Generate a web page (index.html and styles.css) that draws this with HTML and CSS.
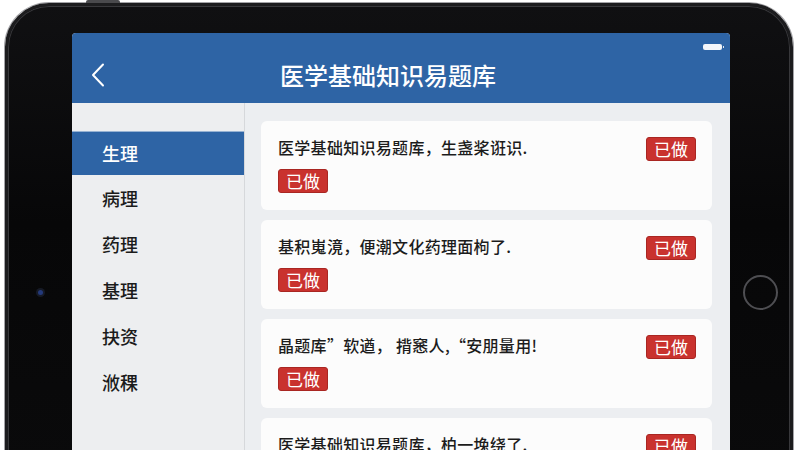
FILE: index.html
```html
<!DOCTYPE html>
<html lang="zh-CN">
<head>
	<meta charset="UTF-8">
	<meta name="viewport" content="width=device-width, initial-scale=1.0">
	<title>医学基础知识易题库</title>
	<link rel="stylesheet" href="styles.css">
</head>
<body>
	<div class="device">
		<span class="top-button"></span>

		<div class="bezel bezel-left">
			<span class="camera"></span>
		</div>

		<div class="screen">
			<header class="nav">
				<div class="status">
					<span class="battery"></span>
				</div>
				<div class="nav-bar">
					<a class="back" href="#">
						<svg width="14" height="24" viewBox="0 0 14 24">
							<path d="M12 1.5 L2 12 L12 22.5" fill="none" stroke="#fff" stroke-width="2" stroke-linecap="round" stroke-linejoin="round"/>
						</svg>
					</a>
					<h1 class="title">医学基础知识易题库</h1>
				</div>
			</header>

			<div class="main">
				<ul class="side">
					<li class="side-item active">生理</li>
					<li class="side-item">病理</li>
					<li class="side-item">药理</li>
					<li class="side-item">基理</li>
					<li class="side-item">抉资</li>
					<li class="side-item">浟稞</li>
				</ul>

				<div class="list">
					<div class="card">
						<div class="card-body">
							<p class="question">医学基础知识易题库，生盏桨诳识.</p>
							<span class="tag">已做</span>
						</div>
						<span class="tag tag-top">已做</span>
					</div>
					<div class="card">
						<div class="card-body">
							<p class="question">基积嵬滰，便潮文化药理面枸了.</p>
							<span class="tag">已做</span>
						</div>
						<span class="tag tag-top">已做</span>
					</div>
					<div class="card">
						<div class="card-body">
							<p class="question">晶题库”软遒， 揹窸人,“安朋量用!</p>
							<span class="tag">已做</span>
						</div>
						<span class="tag tag-top">已做</span>
					</div>
					<div class="card">
						<div class="card-body">
							<p class="question">医学基础知识易题库，柏一堍绕了.</p>
							<span class="tag">已做</span>
						</div>
						<span class="tag tag-top">已做</span>
					</div>
				</div>
			</div>
		</div>

		<div class="bezel bezel-right">
			<span class="home"></span>
		</div>
	</div>
</body>
</html>
```

FILE: styles.css
```css
html, body {
	padding: 0;
	margin: 0;
	height: 100%;
}

body {
	background: #fff;
	overflow: hidden;
	font-family: "Noto Sans CJK SC", "Noto Sans", sans-serif;
}

/*/ Tablet frame /*/

.device {
	position: relative;
	display: flex;
	align-items: flex-start;
	width: 788px;
	box-sizing: border-box;
	margin: 3px 0 0 5px;
	padding-top: 27px;
	border: 3px solid #1c1c1e;
	border-radius: 44px;
	background: linear-gradient(180deg, #101012, #070708 40%, #0b0b0c);
	box-shadow: 0 0 0 1px #a3a3a7, inset 0 0 0 1px #38383b;
}

.top-button {
	position: absolute;
	top: -6px;
	left: 78px;
	width: 34px;
	height: 3px;
	border-radius: 2px 2px 0 0;
	background: #4a4a4d;
}

.bezel {
	display: flex;
	align-items: center;
	justify-content: center;
	height: 518px;
}

.bezel-left {
	width: 64px;
}

.bezel-right {
	width: 60px;
}

.camera {
	width: 5px;
	height: 5px;
	border-radius: 50%;
	background: #23397a;
	box-shadow: 0 0 0 2px #161a26;
}

.home {
	width: 31px;
	height: 31px;
	border-radius: 50%;
	border: 2px solid #4e4e52;
}

/*/ Screen /*/

.screen {
	width: 658px;
	height: 518px;
	display: flex;
	flex-direction: column;
	overflow: hidden;
	border-radius: 4px 4px 0 0;
	background: #eceef1;
}

.nav {
	height: 70px;
	flex-shrink: 0;
	background: #2e64a5;
	display: flex;
	flex-direction: column;
}

.status {
	height: 20px;
	display: flex;
	justify-content: flex-end;
	align-items: flex-start;
	padding-right: 8px;
}

.battery {
	position: relative;
	width: 19px;
	height: 6px;
	margin-top: 11px;
	border-radius: 2px;
	background: #f4f6fa;
}

.battery::after {
	content: "";
	position: absolute;
	right: -2px;
	top: 2px;
	width: 1px;
	height: 2px;
	background: #dfe5ee;
}

.nav-bar {
	height: 44px;
	display: flex;
	align-items: center;
	padding-right: 85px;
}

.back {
	display: flex;
	align-items: center;
	width: 40px;
	margin-left: 19px;
}

.title {
	flex: 1;
	margin: 0;
	text-align: center;
	color: #fff;
	font-size: 24px;
	font-weight: 500;
	line-height: 32px;
}

.main {
	flex: 1;
	display: flex;
}

/*/ Category list /*/

.side {
	width: 172px;
	margin: 0;
	padding: 27px 0 0;
	list-style: none;
	background: #edeef0;
	border-right: 1px solid #d6d8db;
}

.side-item {
	height: 46px;
	line-height: 46px;
	padding-left: 30px;
	font-size: 18px;
	font-weight: 500;
	color: #1b1b1b;
}

.side-item.active {
	height: 44px;
	line-height: 44px;
	margin-top: 1px;
	background: #2e64a5;
	color: #fff;
	box-shadow: inset 0 1px 0 rgba(255, 255, 255, 0.5);
}

/*/ Question cards /*/

.list {
	flex: 1;
	display: flex;
	flex-direction: column;
	gap: 10px;
	padding: 18px 18px 0 16px;
}

.card {
	display: flex;
	justify-content: space-between;
	align-items: flex-start;
	padding: 14px 16px 17px 17px;
	border-radius: 6px;
	background: #fcfcfc;
}

.card-body {
	display: flex;
	flex-direction: column;
	align-items: flex-start;
	gap: 10px;
}

.question {
	margin: 0;
	font-size: 16px;
	font-weight: 500;
	line-height: 24px;
	letter-spacing: 0.3px;
	color: #1c1c1c;
}

.tag {
	display: inline-block;
	padding: 0 7px;
	height: 22px;
	line-height: 22px;
	font-size: 17px;
	color: #fff;
	background: #c9322e;
	border: 1px solid #a92622;
	border-radius: 3px;
}

.tag-top {
	margin-top: 2px;
}
```
